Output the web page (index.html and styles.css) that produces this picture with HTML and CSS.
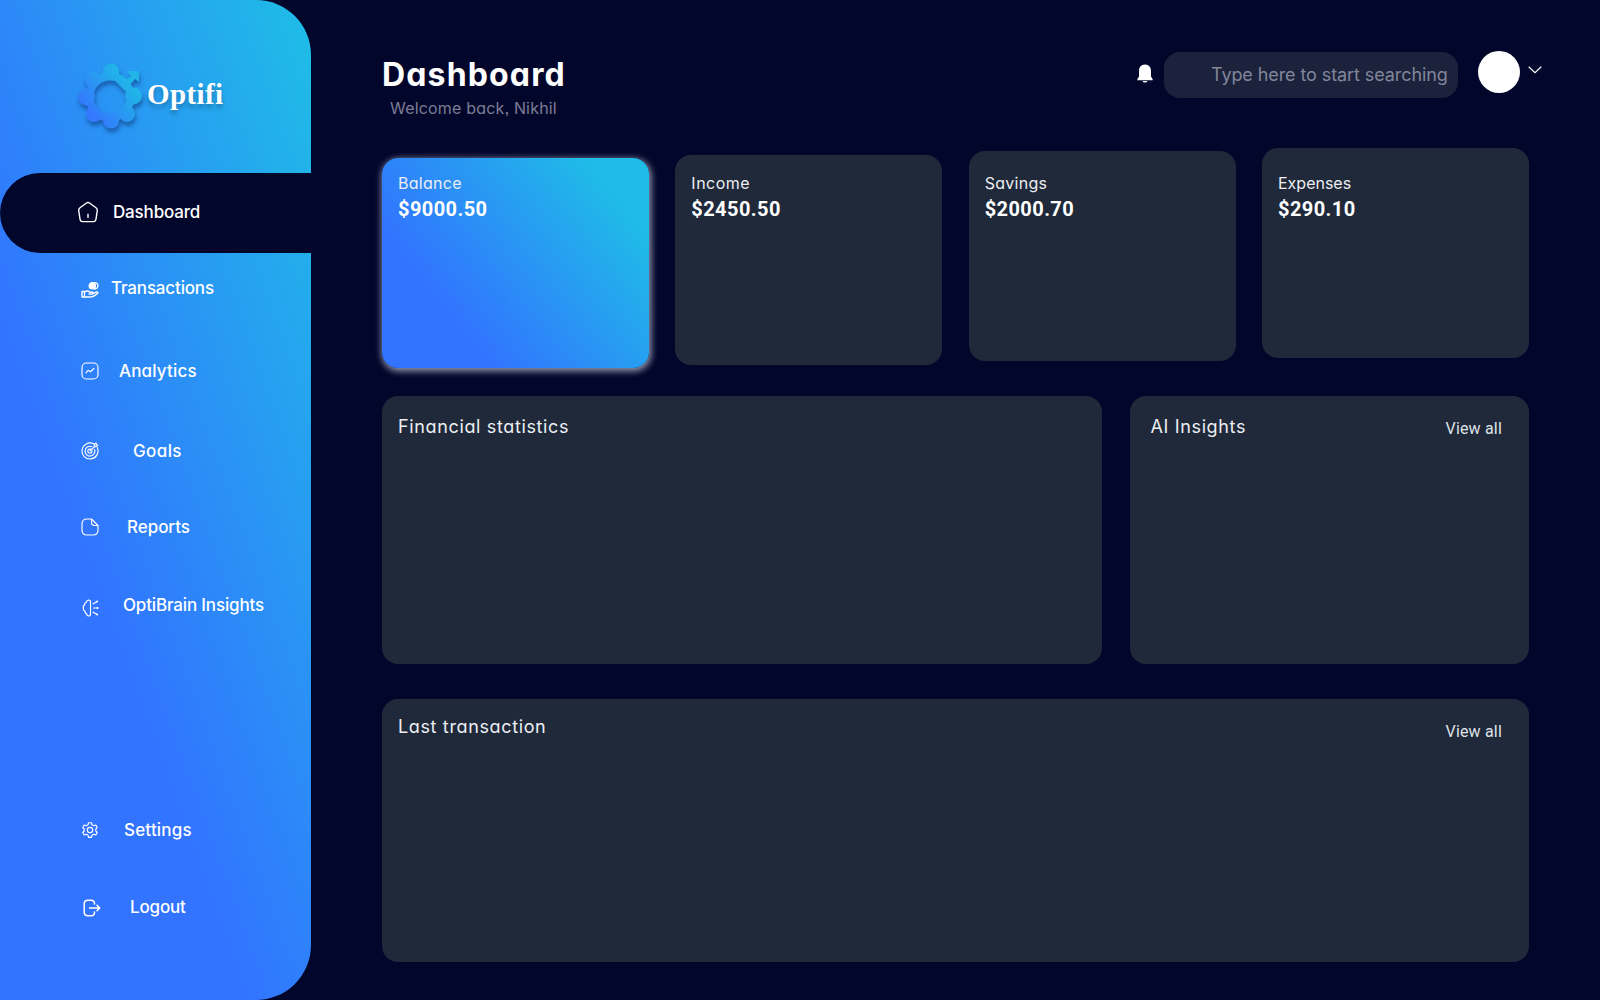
FILE: index.html
```html
<!DOCTYPE html>
<html lang="en">
<head>
<meta charset="utf-8">
<title>Optifi Dashboard</title>
<link rel="stylesheet" href="styles.css">
</head>
<body>
<div class="app">
  <aside class="sidebar">
    <div class="brand">
      <svg class="brand-mark" width="70" height="74" viewBox="76 60 70 74">
        <defs>
          <linearGradient id="ring" gradientUnits="userSpaceOnUse" x1="88" y1="112" x2="126" y2="80">
            <stop offset="0" stop-color="#3478fd"/>
            <stop offset="1" stop-color="#20b4e8"/>
          </linearGradient>
        </defs>
        <g fill="url(#ring)">
          <circle cx="110" cy="97" r="20.5" fill="none" stroke="url(#ring)" stroke-width="8"/>
          <circle cx="111" cy="72" r="8.3"/>
          <circle cx="92.500" cy="79.500" r="8"/>
          <circle cx="86.500" cy="97" r="8.500"/>
          <circle cx="94" cy="114" r="8"/>
          <circle cx="111" cy="120.500" r="8"/>
          <circle cx="127" cy="114" r="8"/>
          <circle cx="133.500" cy="96" r="8.500"/>
          <path d="M117 76L126 80L131 76L127 71H139V82L135 79L129 86L131 94L124 90L116 82Z"/>
        </g>
      </svg>
      <span class="brand-name">Optifi</span>
    </div>
    <nav class="nav">
      <a class="nav-item active">
        <svg class="icon home" viewBox="0 0 22 22"><path d="M9.500 2Q11 1 12.500 2L19 6.800Q20.500 8 20.300 9.600L19 18Q18.600 20.600 16.500 20.600H5.500Q3.400 20.600 3 18L1.700 9.600Q1.500 8 3 6.800ZM11 13.300V16.500"/></svg>
        <span class="label">Dashboard</span>
      </a>
      <a class="nav-item transactions">
        <svg class="icon" viewBox="0 0 18 18"><circle cx="11.300" cy="4.800" r="3.200" fill="#fff"/><path d="M13.500 1.600C18 1.300 18 8.300 13.500 8M1 10.500H3.500V16H1ZM3.500 11C6 9 7.500 10 9 11.300H11.500C13 11.500 12.500 13 11 13H8M12.500 12.300L15.500 11C17 10.800 17.500 12 16 13C12 16.500 9 16.300 3.500 15.700" stroke-width="1.400"/></svg>
        <span class="label">Transactions</span>
      </a>
      <a class="nav-item analytics">
        <svg class="icon" viewBox="0 0 18 18"><rect x="1" y="1" width="16" height="16" rx="4.500"/><path d="M5 11L6.600 8.800Q7.300 8 8 8.800L9 9.500Q9.700 10 10.300 9L12.800 6.500"/></svg>
        <span class="label geo">Analytics</span>
      </a>
      <a class="nav-item goals">
        <svg class="icon" viewBox="0 0 18 18"><path d="M12.500 1.800A8 8 0 1 0 16.300 5.700M10.500 4.500A4.900 4.900 0 1 0 13.600 7.600M9.500 7.100A2.100 2.100 0 1 0 11 8.900M9 9L14 4M13.300 4.700V2.500L15 1L15.400 2.700L17 3.200L15.400 4.700Z"/></svg>
        <span class="label geo">Goals</span>
      </a>
      <a class="nav-item reports">
        <svg class="icon" viewBox="0 0 18 18"><path d="M10.500 1H6Q1 1 1 6V12Q1 17 6 17H12Q17 17 17 12V7.500ZM10.500 1V4.500Q10.500 7.500 13.500 7.500H17"/></svg>
        <span class="label">Reports</span>
      </a>
      <a class="nav-item brain">
        <svg class="icon" viewBox="0 0 18 18"><path d="M9.500 3Q9.500 1 7.500 1Q5.500 1.200 5.500 3.200Q3.500 3.500 3.800 5.800Q1.500 7 2.500 9Q1.800 11.500 4 12Q3.800 14.500 5.700 14.800Q5.800 17 7.700 17Q9.500 17 9.500 15ZM12 5L15.500 2.700M12.500 9H16.500M12 13L15.500 15.300"/><path d="M16 2.500h.1M16.500 9h.1M16 15.500h.1" stroke-width="2"/></svg>
        <span class="label">OptiBrain Insights</span>
      </a>
      <a class="nav-item settings">
        <svg class="icon" viewBox="0 0 18 18"><circle cx="9" cy="9" r="2.700"/><path d="M7.500 1.700H10.500L11 3.800L12.700 4.700L14.800 4L16.200 6.600L14.800 8V10L16.200 11.500L14.800 14L12.700 13.300L11 14.200L10.500 16.300H7.500L7 14.200L5.300 13.300L3.200 14L1.800 11.500L3.200 10V8L1.800 6.600L3.200 4L5.300 4.700L7 3.800Z"/></svg>
        <span class="label geo">Settings</span>
      </a>
      <a class="nav-item logout">
        <svg class="icon" viewBox="0 0 18 18"><path d="M11.500 5V4.500Q11.500 1.200 8 1.200H5Q1.200 1.200 1.200 5V13Q1.200 16.800 5 16.800H8Q11.500 16.800 11.500 13.500V13M6.500 9H16.500M14 6.200L16.700 9L14 11.800" stroke-width="1.500"/></svg>
        <span class="label">Logout</span>
      </a>
    </nav>
  </aside>

  <main class="main">
    <header class="header">
      <div class="heading">
        <h1 class="title geo">Dashboard</h1>
        <p class="welcome geo">Welcome back, Nikhil</p>
      </div>
      <div class="tools">
        <svg class="bell" width="16" height="19" viewBox="0 0 16 19"><path fill="#fff" d="M8 .5C3.800.500 2 3.500 2 7V12.500L.4 15V16.200H15.600V15L14 12.500V7C14 3.500 12.200.500 8 .5ZM5.500 17H10.500Q10 18.600 8 18.600T5.500 17Z"/></svg>
        <div class="search"><span class="search-text">Type here to start searching</span></div>
        <div class="avatar"></div>
        <svg class="chevron" width="14" height="8" viewBox="0 0 14 8"><path d="M.7.700L7 6.700L13.300.700" fill="none" stroke="#fff" stroke-width="1.200"/></svg>
      </div>
    </header>

    <section class="stats">
      <article class="card balance"><span class="card-label geo">Balance</span><strong class="amount">$9000.50</strong></article>
      <article class="card income"><span class="card-label geo">Income</span><strong class="amount">$2450.50</strong></article>
      <article class="card savings"><span class="card-label geo">Savings</span><strong class="amount">$2000.70</strong></article>
      <article class="card expenses"><span class="card-label geo">Expenses</span><strong class="amount">$290.10</strong></article>
    </section>

    <section class="row">
      <article class="panel financial"><h2 class="panel-title geo">Financial statistics</h2></article>
      <article class="panel insights"><h2 class="panel-title geo">AI Insights</h2><a class="view-all">View all</a></article>
    </section>

    <section class="panel last"><h2 class="panel-title geo">Last transaction</h2><a class="view-all">View all</a></section>
  </main>
</div>
</body>
</html>
```
FILE: styles.css
```css
* { box-sizing: border-box; }
body {
  margin: 0;
  background: #03062b;
  color: #fff;
  font-family: Inter, "Liberation Sans", sans-serif;
}
.geo { font-feature-settings: "cv11", "ss03"; }
.app { display: flex; width: 1600px; height: 1000px; overflow: hidden; }

.sidebar {
  width: 311px;
  height: 1000px;
  flex: none;
  border-radius: 0 55px 55px 0;
  background: linear-gradient(70deg, #3273ff 36%, #1fbce7 98%);
}
.brand { display: flex; height: 173px; padding: 60px 0 0 76px; }
.brand-mark { flex: none; filter: drop-shadow(1px 4px 2px rgba(0, 20, 80, .4)); }
.brand-name {
  margin: 17px 0 0 1px;
  font: bold 29px/34px "Liberation Serif", serif;
  letter-spacing: .4px;
  text-shadow: 0 4px 4px rgba(0, 0, 0, .25);
}
.nav { display: flex; flex-direction: column; }
.nav-item { display: flex; align-items: center; height: 24px; padding-left: 81px; }
.icon {
  width: 18px;
  height: 18px;
  flex: none;
  fill: none;
  stroke: #fff;
  stroke-width: 1.15;
  stroke-linecap: round;
  stroke-linejoin: round;
}
.label { font-size: 17px; font-weight: 500; line-height: 24px; letter-spacing: -.16px; white-space: nowrap; }
.nav-item.active {
  height: 80px;
  padding: 0 0 2px 77px;
  border-radius: 40px 0 0 40px;
  background: #03062b;
}
.icon.home { width: 22px; height: 22px; stroke-width: 1.4; }
.active .label { margin-left: 14px; }
.transactions { margin-top: 23px; }
.transactions .icon { margin-top: 3px; }
.transactions .label { margin-left: 12px; }
.analytics { margin-top: 59px; }
.analytics .label { margin-left: 20px; letter-spacing: .17px; }
.goals { margin-top: 56px; }
.goals .label { margin-left: 34px; letter-spacing: .4px; }
.reports { margin-top: 52px; }
.reports .label { margin-left: 28px; letter-spacing: -.05px; }
.brain { margin-top: 54px; }
.brain .icon { margin-top: 5px; }
.brain .label { margin-left: 24px; }
.settings { margin-top: 201px; }
.settings .label { margin-left: 25px; letter-spacing: .2px; }
.logout { margin-top: 53px; padding-left: 83px; }
.logout .icon { margin-top: 1px; }
.logout .label { margin-left: 29px; }

.main { width: 1218px; padding-left: 71px; }
.header { display: flex; justify-content: space-between; height: 148px; }
.title { margin: 54px 0 0; font-size: 32px; line-height: 42px; font-weight: 700; letter-spacing: 1.15px; }
.welcome { margin: 0 0 0 8px; font-size: 16px; line-height: 24px; letter-spacing: .18px; color: #7b7d94; white-space: nowrap; }
.tools { display: flex; align-items: flex-start; margin-right: -13px; }
.bell { margin: 64px 11px 0 0; }
.search {
  width: 294px;
  height: 46px;
  margin: 52px 20px 0 0;
  padding: 0 0 0 47px;
  border-radius: 16px;
  background: #1c223c;
}
.search-text { font-size: 18px; line-height: 46px; letter-spacing: -.09px; color: #81869a; white-space: nowrap; }
.avatar { width: 42px; height: 42px; margin: 51px 8px 0 0; border-radius: 50%; background: #fff; }
.chevron { margin-top: 66px; }

.stats { display: grid; grid-template-columns: repeat(4, 267px); justify-content: space-between; height: 248px; align-items: start; }
.card {
  display: flex;
  flex-direction: column;
  height: 210px;
  padding-left: 16px;
  border-radius: 16px;
  background: #1f293a;
}
.card.balance {
  margin-top: 10px;
  padding-top: 13px;
  background: linear-gradient(51.5deg, #3273ff 25%, #1fbce7 86%);
  box-shadow: 1px 2px 7px 1px rgba(235, 240, 255, .65);
}
.card.income { margin-top: 6.5px; padding-top: 16.5px; }
.card.savings { margin-top: 3px; padding-top: 20px; }
.card.expenses { padding-top: 23px; }
.card-label { font-size: 16px; line-height: 24px; letter-spacing: .28px; color: #eceef2; }
.income .card-label { letter-spacing: .5px; }
.expenses .card-label { letter-spacing: 0; }
.amount { margin-top: 1px; font: 700 20px/26px Roboto, sans-serif; letter-spacing: .42px; }

.row { display: flex; justify-content: space-between; height: 303px; }
.panel {
  display: flex;
  justify-content: space-between;
  padding: 18px 27px 0 16px;
  border-radius: 16px;
  background: #1f293a;
}
.financial { width: 720px; height: 268px; }
.insights { width: 399px; height: 268px; padding-left: 20.5px; }
.last { height: 263px; padding-top: 15px; }
.panel-title { margin: 0; font-size: 18px; font-weight: 400; line-height: 26px; letter-spacing: .64px; color: #eceef2; }
.view-all { margin-top: 3px; font: 400 16px/24px Roboto, sans-serif; letter-spacing: .18px; color: #dfe2e8; }
.last .view-all { margin-top: 6px; }
```
